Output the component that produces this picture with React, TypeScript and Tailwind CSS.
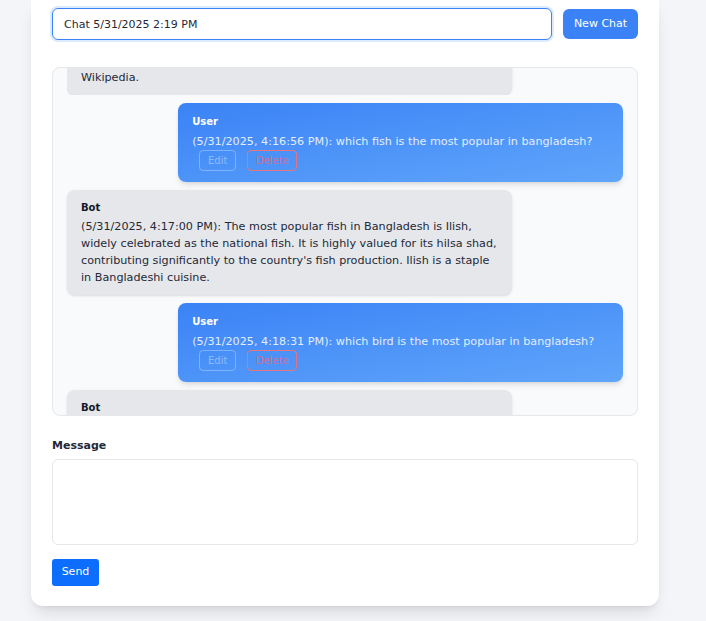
const messages = [
  {
    role: 'bot',
    time: '5/31/2025, 4:15:40 PM',
    text: 'The national bird of Bangladesh is the Oriental magpie-robin, known locally as the doel. It is commonly found in gardens and villages, according to sources such as\nWikipedia.',
  },
  { role: 'user', time: '5/31/2025, 4:16:56 PM', text: 'which fish is the most popular in bangladesh?' },
  {
    role: 'bot',
    time: '5/31/2025, 4:17:00 PM',
    text: "The most popular fish in Bangladesh is Ilish, widely celebrated as the national fish. It is highly valued for its hilsa shad, contributing significantly to the country's fish production. Ilish is a staple in Bangladeshi cuisine.",
  },
  { role: 'user', time: '5/31/2025, 4:18:31 PM', text: 'which bird is the most popular in bangladesh?' },
  {
    role: 'bot',
    time: '5/31/2025, 4:18:35 PM',
    text: 'The most popular bird in Bangladesh is the Oriental magpie-robin, locally called the doel, which is also the national bird.',
  },
];

function Bubble({ role, time, text }: { role: string; time: string; text: string }) {
  if (role === 'user') {
    return (
      <div className="flex justify-end">
        <div className="w-[80%] rounded-lg bg-gradient-to-br from-[#3b82f6] to-[#60a5fa] px-[14px] pt-3 pb-[11px] text-white shadow-md">
          <div className="mb-1 text-[10px] font-bold leading-[14px]">User</div>
          <div className="text-[11.2px] leading-[17px] text-[#e3edff]">
            ({time}): {text}
          </div>
          <div className="ml-[7px] flex gap-[11px]">
            <button className="h-[21px] w-[37px] rounded border border-[#93c5fd]/70 text-[10px] text-white/40">Edit</button>
            <button className="h-[21px] w-[50px] rounded border border-[#f87171]/90 text-[10px] text-[#f0657a]/80">Delete</button>
          </div>
        </div>
      </div>
    );
  }
  return (
    <div className="flex justify-start">
      <div className="w-[80%] rounded-lg bg-[#e5e7eb] px-[14px] pt-[11px] pb-[9px] text-[#1f2937] shadow-sm">
        <div className="mb-[3px] text-[10px] font-bold leading-[14px] text-[#111827]">Bot</div>
        <div className="whitespace-pre-line text-[11.2px] leading-[17px] text-[#1f2937]">
          ({time}): {text}
        </div>
      </div>
    </div>
  );
}

export default function App() {
  const [first, ...rest] = messages;
  return (
    <div className="min-h-[621px] bg-[#f4f5f8] font-['DejaVu_Sans',sans-serif]">
      <div className="ml-[31px] w-[628px] rounded-b-xl bg-white px-[21px] pt-2 pb-5 shadow-lg">
        <div className="flex gap-[11px]">
          <input
            readOnly
            value="Chat 5/31/2025 2:19 PM"
            className="h-8 flex-1 rounded-md border border-[#3b82f6] px-[11px] text-[11px] text-[#1f2937] outline-none ring-2 ring-[#dbeafe]"
          />
          <button className="mt-px h-[30px] w-[75px] rounded-md bg-[#3b82f6] text-[11px] text-white">New Chat</button>
        </div>

        <div className="mt-[27px] h-[349px] overflow-hidden rounded-lg border border-[#e5e7eb] bg-[#f9fafb] px-[14px]">
          <div className="flex flex-col gap-2">
            <div className="flex h-[27px] flex-col justify-end overflow-hidden">
              <Bubble {...first} />
            </div>
            {rest.map((m, i) => (
              <Bubble key={i} {...m} />
            ))}
          </div>
        </div>

        <label className="mt-[23px] block text-[11px] font-bold leading-[14px] text-[#1f2937]">Message</label>
        <textarea className="mt-[6px] block h-[86px] w-full resize-none rounded-md border border-[#e5e7eb] outline-none" />
        <button className="mt-[14px] h-[27px] w-[47px] rounded-[3px] bg-[#0d6efd] text-[11px] text-white">Send</button>
      </div>
    </div>
  );
}
